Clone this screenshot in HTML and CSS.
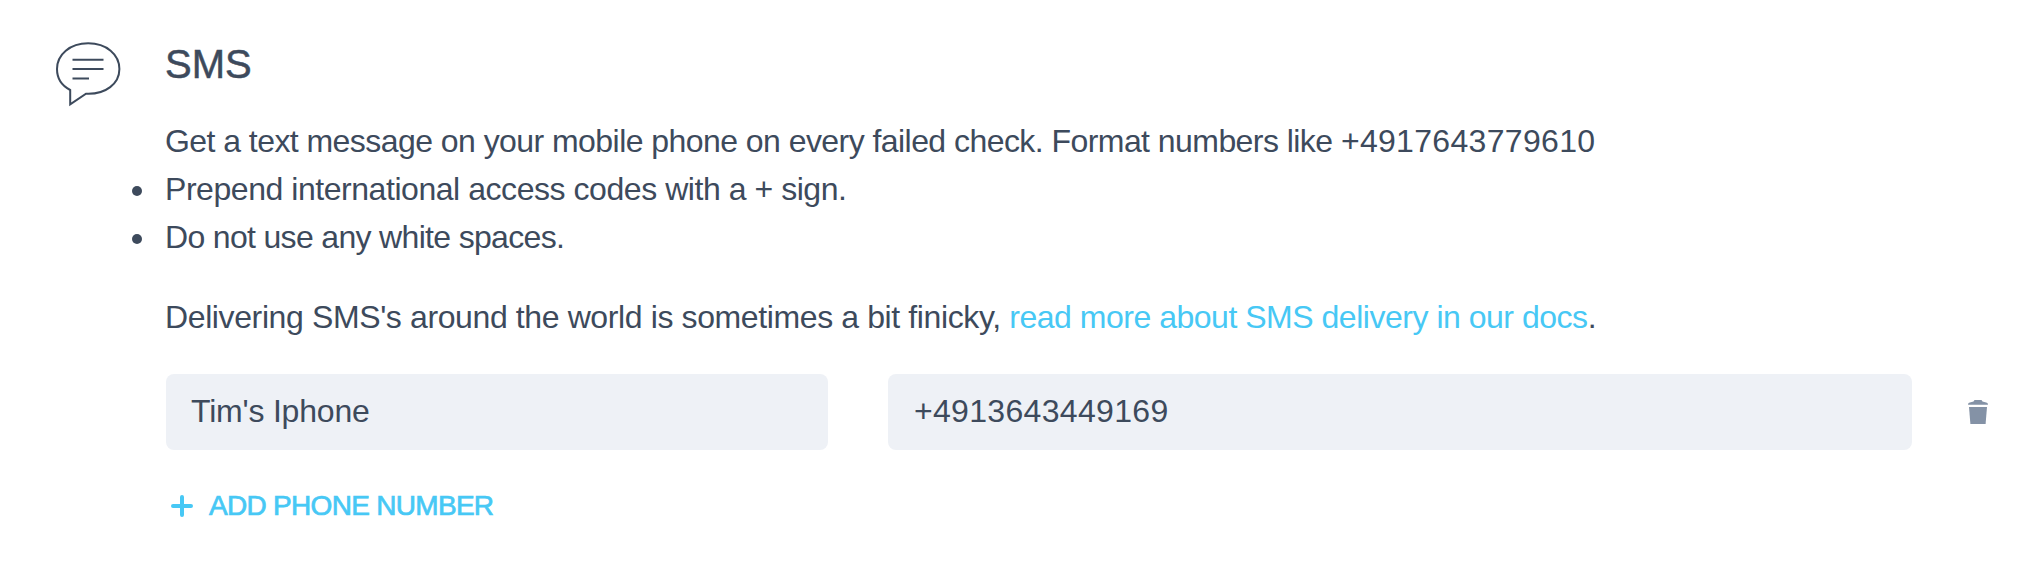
FILE: index.html
```html
<!DOCTYPE html>
<html lang="en">
<head>
<meta charset="utf-8">
<title>SMS</title>
<link rel="stylesheet" href="styles.css">
</head>
<body>
<section class="channel">
  <svg class="channel-icon" viewBox="0 0 66 66" fill="none" stroke="#3d4a5c" stroke-width="2">
    <path d="M14.200 48C5.500 43.500 1 36 1 27C1 12.500 14 1.300 32.200 1.300S63.400 12.500 63.400 27S50 52.600 30 51.700L14.200 62.300Z"/>
    <path d="M16.500 17.700H47.500M16.500 27.100H47.500M16.500 36.600H33"/>
  </svg>
  <div class="channel-body">
    <h2 class="title">SMS</h2>
    <p class="text intro">Get a text message on your mobile phone on every failed check. Format numbers like <span class="number">+4917643779610</span></p>
    <ul class="rules">
      <li class="text rule-codes">Prepend international access codes with a + sign.</li>
      <li class="text rule-spaces">Do not use any white spaces.</li>
    </ul>
    <p class="text docs">Delivering SMS's around the world is sometimes a bit finicky, <a class="link">read more about SMS delivery in our docs</a>.</p>
    <div class="row">
      <div class="field name">Tim's Iphone</div>
      <div class="field number">+4913643449169</div>
      <svg class="trash" viewBox="0 0 20 24" fill="#8492a6">
        <path d="M6.500 0H13.500L14.500 1.500L19 2.700Q20 3.200 20 4.800H0Q0 3.200 1 2.700L5.500 1.500Z"/>
        <path d="M1 7H19L17.600 24H2.400Z"/>
      </svg>
    </div>
    <div class="add">
      <svg class="plus" viewBox="0 0 22 22" fill="none" stroke="#47c8f5" stroke-width="4" stroke-linecap="round"><path d="M11 2V20M2 11H20"/></svg>
      <span class="add-label">ADD PHONE NUMBER</span>
    </div>
  </div>
</section>
</body>
</html>
```
FILE: styles.css
```css
body {
  margin: 0;
  background: #fff;
  color: #3d4a5c;
  font-family: "Liberation Sans", Arial, sans-serif;
}
.channel {
  display: flex;
  padding: 42px 54px 0 56px;
}
.channel-icon {
  flex: none;
  width: 66px;
  height: 66px;
  margin: 0 43px 0 0;
}
.channel-body {
  flex: 1;
}
.title {
  margin: 0;
  font-size: 40px;
  line-height: 44px;
  font-weight: 400;
  -webkit-text-stroke: 0.5px;
}
.text {
  margin: 0;
  font-size: 32px;
  line-height: 48px;
  white-space: nowrap;
}
.intro {
  margin-top: 31px;
  letter-spacing: -0.555px;
}
.rules {
  margin: 0;
  padding: 0;
  list-style: none;
}
.rules .text {
  display: flex;
  align-items: center;
}
.rules .text::before {
  content: "";
  width: 10px;
  height: 10px;
  margin: 3px 23px 0 -33px;
  border-radius: 50%;
  background: #3d4a5c;
}
.rule-codes {
  letter-spacing: -0.45px;
}
.rule-spaces {
  letter-spacing: -0.67px;
}
.docs {
  margin-top: 32px;
  letter-spacing: -0.385px;
}
.link {
  color: #47c8f5;
  letter-spacing: -0.48px;
}
.row {
  display: flex;
  align-items: center;
  margin: 33px 0 0 1px;
}
.field {
  box-sizing: border-box;
  height: 76px;
  padding: 0 26px;
  border-radius: 8px;
  background: #eef1f6;
  font-size: 32px;
  line-height: 74px;
}
.name {
  width: 662px;
  padding-left: 25px;
  margin-right: 60px;
  letter-spacing: -0.2px;
}
.number {
  letter-spacing: 0.32px;
}
.field.number {
  width: 1024px;
}
.trash {
  width: 20px;
  height: 24px;
  margin: 0 0 0 56px;
}
.add {
  display: flex;
  align-items: center;
  margin: 38px 0 0 6px;
  color: #47c8f5;
}
.plus {
  width: 22px;
  height: 22px;
  margin: -1px 16px 0 0;
}
.add-label {
  font-size: 28px;
  line-height: 36px;
  letter-spacing: -0.7px;
  -webkit-text-stroke: 0.7px;
}
```
